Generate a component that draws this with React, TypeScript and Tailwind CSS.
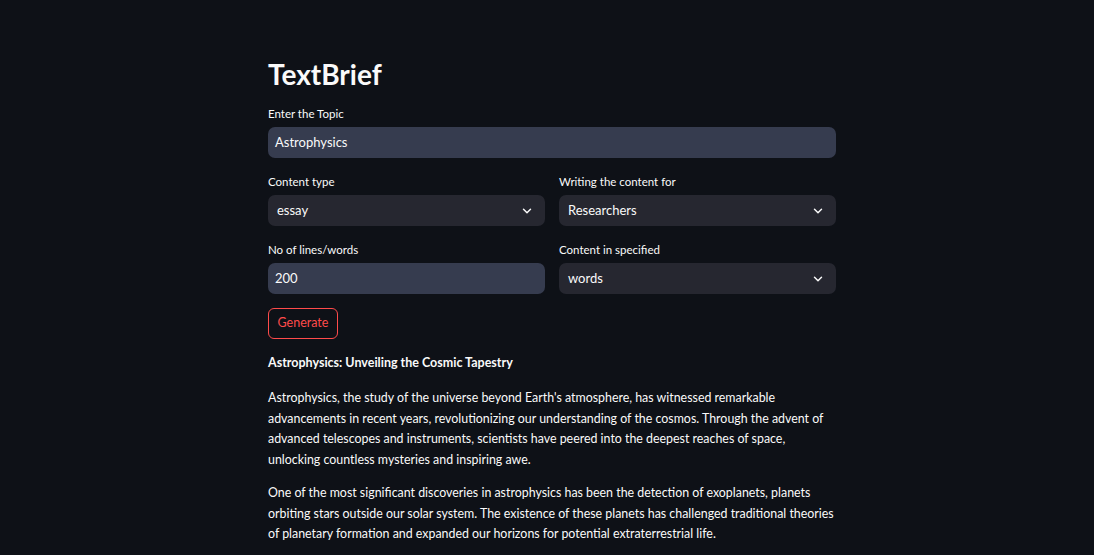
import React from 'react';
import { ChevronDown } from 'lucide-react';

const font = { fontFamily: 'Lato, "Noto Sans", sans-serif' };

const Label: React.FC<{ children: React.ReactNode }> = ({ children }) => (
  <div className="text-[11.5px] leading-[14px] text-[#fafafa] mb-[6px]">{children}</div>
);

const TextInput: React.FC<{ value: string }> = ({ value }) => (
  <div className="h-[31px] rounded-[7px] bg-[#363c4f] flex items-center px-[7px] text-[13px] text-[#fafafa]">
    {value}
  </div>
);

const Select: React.FC<{ value: string }> = ({ value }) => (
  <div className="h-[31px] rounded-[7px] bg-[#262730] flex items-center justify-between pl-[9px] pr-[11px] text-[13px] text-[#fafafa]">
    <span>{value}</span>
    <ChevronDown size={14} strokeWidth={2.5} />
  </div>
);

const App: React.FC = () => {
  return (
    <div className="h-[555px] overflow-hidden w-full bg-[#0e1117] text-[#fafafa]" style={font}>
      <div className="w-[568px] ml-[268px] pt-[57px]">
        <h1 className="text-[28px] leading-[34px] font-bold mb-[16px]">TextBrief</h1>

        <Label>Enter the Topic</Label>
        <TextInput value="Astrophysics" />

        <div className="grid grid-cols-2 gap-x-[14px] mt-[17px]">
          <div>
            <Label>Content type</Label>
            <Select value="essay" />
          </div>
          <div>
            <Label>Writing the content for</Label>
            <Select value="Researchers" />
          </div>
        </div>

        <div className="grid grid-cols-2 gap-x-[14px] mt-[17px]">
          <div>
            <Label>No of lines/words</Label>
            <TextInput value="200" />
          </div>
          <div>
            <Label>Content in specified</Label>
            <Select value="words" />
          </div>
        </div>

        <button className="mt-[14px] h-[31px] w-[70px] rounded-[6px] border border-[#ff4b4b] text-[#ff4b4b] text-[12.5px]">
          Generate
        </button>

        <p className="mt-[15px] text-[12.5px] leading-[18px] font-bold">Astrophysics: Unveiling the Cosmic Tapestry</p>

        <p className="mt-[16px] text-[12.4px] leading-[20.7px] whitespace-nowrap">
          Astrophysics, the study of the universe beyond Earth's atmosphere, has witnessed remarkable<br />
          advancements in recent years, revolutionizing our understanding of the cosmos. Through the advent of<br />
          advanced telescopes and instruments, scientists have peered into the deepest reaches of space,<br />
          unlocking countless mysteries and inspiring awe.
        </p>

        <p className="mt-[12px] text-[12.4px] leading-[20.7px] whitespace-nowrap">
          One of the most significant discoveries in astrophysics has been the detection of exoplanets, planets<br />
          orbiting stars outside our solar system. The existence of these planets has challenged traditional theories<br />
          of planetary formation and expanded our horizons for potential extraterrestrial life.
        </p>
      </div>
    </div>
  );
};

export default App;
